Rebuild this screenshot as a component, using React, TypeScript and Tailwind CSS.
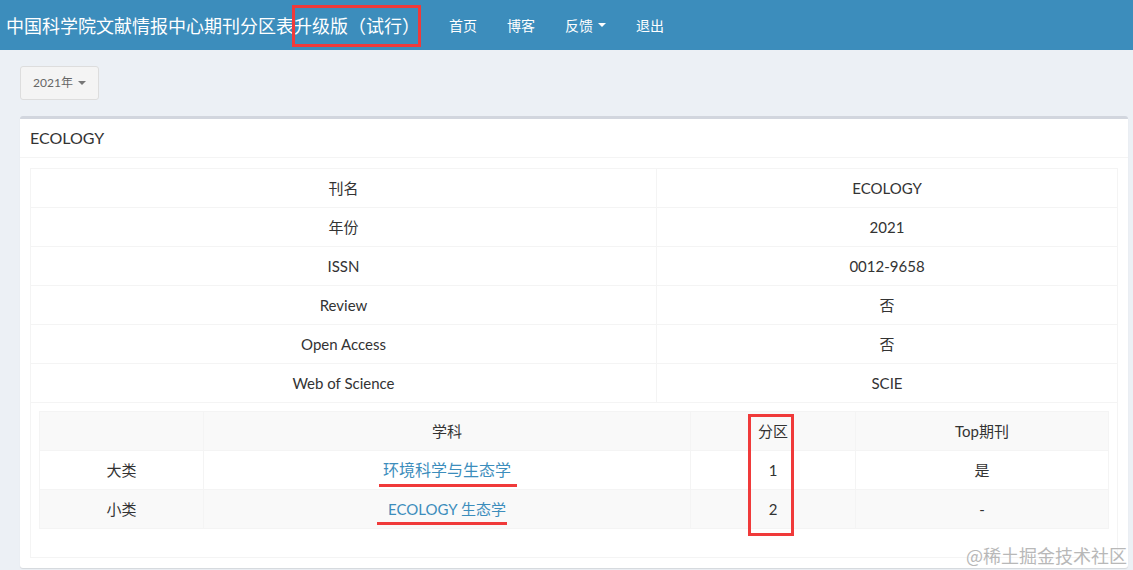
import React from "react";

const latin = "font-['Lato','Noto_Sans_CJK_SC',sans-serif]";

function Caret({ color }: { color: string }) {
  return (
    <span
      className={`inline-block w-0 h-0 ml-[5px] align-middle border-x-4 border-x-transparent border-t-4 ${color}`}
    />
  );
}

function Mark({ left, right, gap }: { left: number; right: number; gap: number }) {
  // red hand-drawn underline from the annotation
  return (
    <span
      className="absolute top-full h-[3px] bg-[#f03a3a]"
      style={{ left: -left, right: -right, marginTop: gap }}
    />
  );
}

const infoRows: [string, string][] = [
  ["刊名", "ECOLOGY"],
  ["年份", "2021"],
  ["ISSN", "0012-9658"],
  ["Review", "否"],
  ["Open Access", "否"],
  ["Web of Science", "SCIE"],
];

export default function App() {
  return (
    <div className={`relative h-[570px] overflow-hidden bg-[#ecf0f5] text-[#333] ${latin}`}>
      {/* Navbar */}
      <header className="h-[50px] bg-[#3c8dbc] flex items-center text-white">
        <div className="pl-[6px] w-[434px] text-[18px] font-['Noto_Sans_CJK_SC',sans-serif] leading-none">
          中国科学院文献情报中心期刊分区表
          <span className="relative">
            升级版（试行）
            <span className="absolute left-[-2px] right-[-1px] top-[-7px] bottom-[-9px] border-[3px] border-[#f03a3a]" />
          </span>
        </div>
        <nav className="flex text-[14px] font-['Noto_Sans_CJK_SC',sans-serif]">
          <a className="px-[15px]">首页</a>
          <a className="px-[15px]">博客</a>
          <a className="px-[15px] flex items-center">
            反馈
            <Caret color="border-t-white" />
          </a>
          <a className="px-[15px]">退出</a>
        </nav>
      </header>

      <main className="pl-5 pr-[5px] pt-4">
        <button className="h-[34px] w-[79px] rounded-[3px] border border-[#ddd] bg-[#f4f4f4] text-[12px] text-[#666] flex items-center justify-center">
          2021年
          <Caret color="border-t-[#777]" />
        </button>

        {/* Box */}
        <section className="mt-[16px] bg-white rounded-[3px] border-t-[3px] border-[#d2d6de] shadow-[0_1px_1px_rgba(0,0,0,0.1)]">
          <div className="h-[39px] px-[10px] flex items-center text-[16px] border-b border-[#f4f4f4]">
            ECOLOGY
          </div>
          <div className="p-[10px]">
            <div className="border border-[#f4f4f4] text-[15px]">
              {infoRows.map(([k, v]) => (
                <div key={k} className="grid grid-cols-[626px_1fr] h-[39px] border-b border-[#f4f4f4]">
                  <div className="flex items-center justify-center border-r border-[#f4f4f4]">{k}</div>
                  <div className="flex items-center justify-center">{v}</div>
                </div>
              ))}
              <div className="p-[8px] pb-[28px]">
                <div className="relative border border-[#f4f4f4]">
                  <div className="grid grid-cols-[164px_487px_165px_1fr] h-[39px] bg-[#f9f9f9] border-b border-[#f4f4f4]">
                    <div className="border-r border-[#f4f4f4]" />
                    <div className="flex items-center justify-center border-r border-[#f4f4f4]">学科</div>
                    <div className="flex items-center justify-center border-r border-[#f4f4f4]">分区</div>
                    <div className="flex items-center justify-center">Top期刊</div>
                  </div>
                  <div className="grid grid-cols-[164px_487px_165px_1fr] h-[39px] border-b border-[#f4f4f4]">
                    <div className="flex items-center justify-center border-r border-[#f4f4f4]">大类</div>
                    <div className="flex items-center justify-center border-r border-[#f4f4f4]">
                      <a className="relative text-[#3c8dbc] text-[16px]">
                        环境科学与生态学
                        <Mark left={4} right={6} gap={2} />
                      </a>
                    </div>
                    <div className="flex items-center justify-center border-r border-[#f4f4f4]">1</div>
                    <div className="flex items-center justify-center">是</div>
                  </div>
                  <div className="grid grid-cols-[164px_487px_165px_1fr] h-[38px] bg-[#f9f9f9]">
                    <div className="flex items-center justify-center border-r border-[#f4f4f4]">小类</div>
                    <div className="flex items-center justify-center border-r border-[#f4f4f4]">
                      <a className="relative text-[#3c8dbc]">
                        ECOLOGY 生态学
                        <Mark left={11} right={1} gap={2} />
                      </a>
                    </div>
                    <div className="flex items-center justify-center border-r border-[#f4f4f4]">2</div>
                    <div className="flex items-center justify-center">-</div>
                  </div>
                  {/* red annotation box around the 分区 column */}
                  <span className="absolute left-[708px] top-[2px] w-[46px] h-[122px] border-[3px] border-[#f03a3a]" />
                </div>
              </div>
            </div>
          </div>
        </section>
      </main>

      <div className="absolute right-[6px] bottom-[6px] text-[18px] leading-none text-[#b8b8b8] font-['Noto_Sans_CJK_SC',sans-serif] [text-shadow:0_0_1px_#fff]">
        @稀土掘金技术社区
      </div>
    </div>
  );
}
